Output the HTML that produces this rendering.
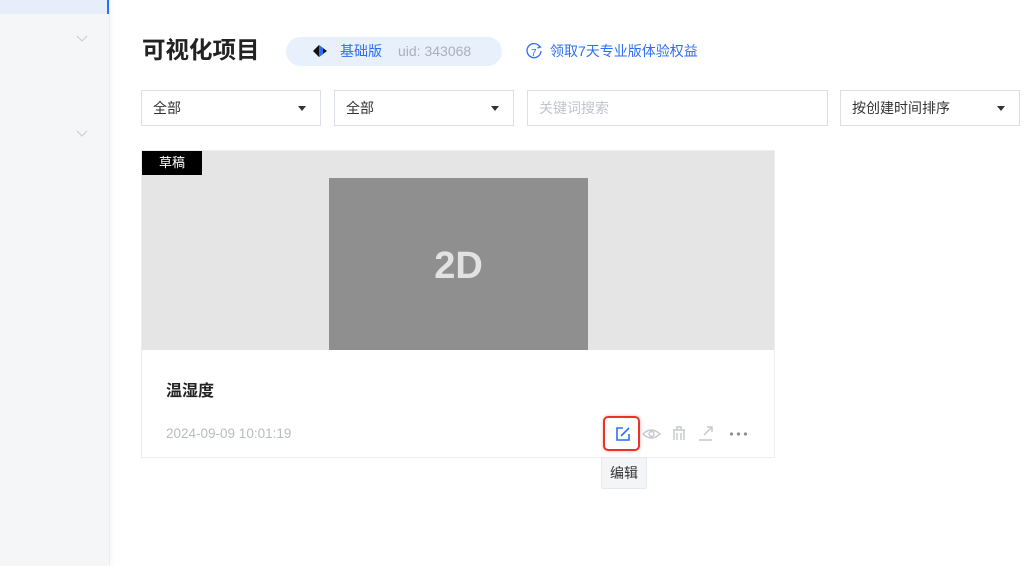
<!DOCTYPE html>
<html><head><meta charset="utf-8"><style>
*{margin:0;padding:0;box-sizing:border-box}
body{width:1035px;height:566px;overflow:hidden;background:#fff;font-family:"Liberation Sans","Noto Sans CJK SC",sans-serif;position:relative}
.a{position:absolute}
.sb{left:0;top:0;width:110px;height:566px;background:#f5f6f8;border-right:1px solid #ebedf0;box-shadow:2px 0 4px rgba(0,0,0,.04)}
.sel{height:36px;border:1px solid #dcdfe4;background:#fff;font-size:14px;color:#333;padding-left:11px;line-height:34px}
.sel i{position:absolute;right:14px;top:15px;border-left:4px solid transparent;border-right:4px solid transparent;border-top:5px solid #333}
</style></head><body>
<div class="a sb"></div>
<div class="a" style="left:0;top:0;width:107px;height:14px;background:#e6eefc"></div>
<div class="a" style="left:107px;top:0;width:2px;height:14px;background:#2a6ff6"></div>
<svg class="a" style="left:76px;top:35px" width="12" height="8"><path d="M1 1l5 5 5-5" fill="none" stroke="#c8ccd2"/></svg>
<svg class="a" style="left:76px;top:130px" width="12" height="8"><path d="M1 1l5 5 5-5" fill="none" stroke="#c8ccd2"/></svg>

<div class="a" style="left:142px;top:35px;font-size:23.5px;font-weight:bold;color:#222;line-height:30px">可视化项目</div>
<div class="a" style="left:286px;top:37px;width:216px;height:29px;border-radius:15px;background:#e8f0fc"></div>
<svg class="a" style="left:313px;top:45px" width="14" height="12"><path d="M0 6L6 0L10 3L14 6L10 9L6 12Z" fill="#111"/><path d="M6 0L10 3L10 9L6 12Z" fill="#2a6ff6"/></svg>
<div class="a" style="left:340px;top:42px;font-size:14px;color:#2a6ff6;line-height:18px">基础版</div>
<div class="a" style="left:398px;top:42px;font-size:14px;color:#aab0bb;line-height:18px">uid: 343068</div>
<svg class="a" style="left:526px;top:43px" width="17" height="17"><path d="M14 4A7 7 0 1 0 15 8" fill="none" stroke="#2a6ff6" stroke-width="1.3"/><path d="M12 2l2.5 2-3 1" fill="none" stroke="#2a6ff6" stroke-width="1.2"/><text x="5" y="13" font-size="10" fill="#2a6ff6" font-family="Liberation Sans">7</text></svg>
<div class="a" style="left:550px;top:42px;font-size:14px;color:#2a6ff6;line-height:18px">领取7天专业版体验权益</div>

<div class="a sel" style="left:141px;top:90px;width:180px">全部<i></i></div>
<div class="a sel" style="left:334px;top:90px;width:180px">全部<i></i></div>
<div class="a sel" style="left:527px;top:90px;width:301px;color:#c0c4cc">关键词搜索</div>
<div class="a sel" style="left:840px;top:90px;width:180px">按创建时间排序<i></i></div>

<div class="a" style="left:141px;top:150px;width:634px;height:308px;border:1px solid #eceef1;background:#fff"></div>
<div class="a" style="left:142px;top:151px;width:632px;height:199px;background:#e5e5e5"></div>
<div class="a" style="left:329px;top:178px;width:259px;height:172px;background:#8f8f8f;color:#e2e2e2;font-size:38px;font-weight:bold;text-align:center;line-height:176px">2D</div>
<div class="a" style="left:142px;top:151px;width:60px;height:24px;background:#000;color:#fff;font-size:13px;text-align:center;line-height:24px">草稿</div>
<div class="a" style="left:166px;top:381px;font-size:16px;font-weight:bold;color:#222;line-height:22px">温湿度</div>
<div class="a" style="left:166px;top:426px;font-size:13.5px;color:#b8bcc3;line-height:16px">2024-09-09 10:01:19</div>

<div class="a" style="left:603px;top:416px;width:37px;height:35px;border:2px solid #e8332a;border-radius:5px;box-shadow:0 0 3px rgba(232,51,42,.4)"></div>
<svg class="a" style="left:615px;top:426px" width="18" height="16"><path d="M8 2H2V14H14V8" fill="none" stroke="#2a6ff6" stroke-width="1.6"/><path d="M6 10L14 2" stroke="#2a6ff6" stroke-width="1.6"/></svg>
<svg class="a" style="left:642px;top:426px" width="20" height="16"><path d="M1 8Q9 0 18 8Q9 16 1 8Z" fill="none" stroke="#c4c8ce" stroke-width="1.4"/><circle cx="9.5" cy="8" r="2.5" fill="none" stroke="#c4c8ce" stroke-width="1.4"/></svg>
<svg class="a" style="left:671px;top:425px" width="16" height="17"><path d="M2 5H14M6 5V2H10V5M3 5V15M13 5V15M6 8V15M10 8V15" fill="none" stroke="#c4c8ce" stroke-width="1.4"/></svg>
<svg class="a" style="left:697px;top:425px" width="18" height="17"><path d="M7 10L15 2M10 2H15V7M2 15H15" fill="none" stroke="#c4c8ce" stroke-width="1.4"/></svg>
<div class="a" style="left:728px;top:432px;width:20px;height:4px;background:radial-gradient(circle,#8a8f96 1.6px,transparent 1.8px) 0 0/7px 4px"></div>

<div class="a" style="left:601px;top:457px;width:46px;height:32px;background:#f4f5f6;border:1px solid #e6e8eb;border-radius:2px;font-size:14px;color:#333;text-align:center;line-height:30px">编辑</div>
</body></html>
